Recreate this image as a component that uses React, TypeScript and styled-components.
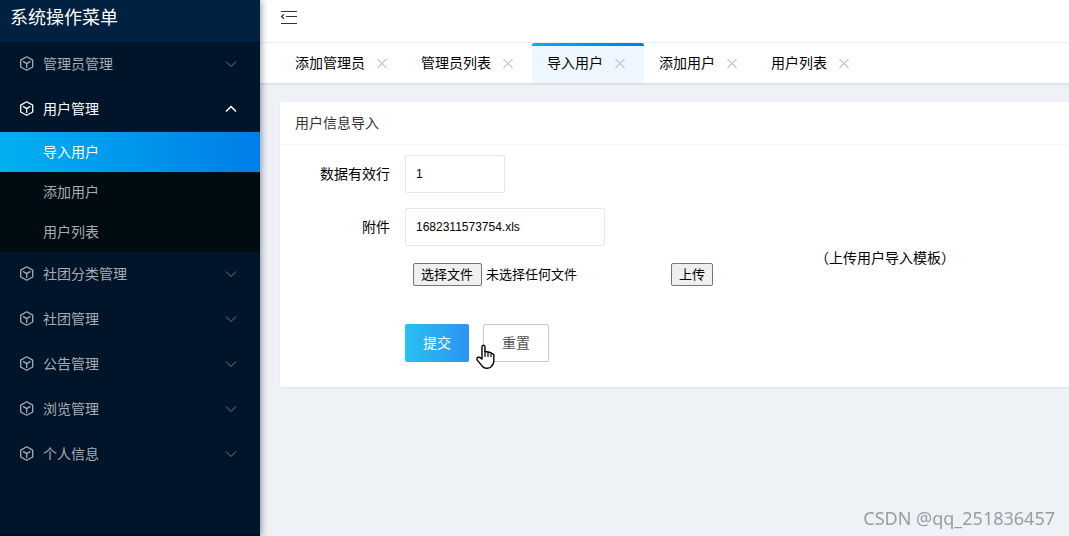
import React, { useState } from "react";
import styled, { createGlobalStyle, css } from "styled-components";

const GlobalStyle = createGlobalStyle`
  * { box-sizing: border-box; }
  body {
    margin: 0;
    background: #eef1f6;
    color: #000;
    font: 14px/20px "Liberation Sans", "Noto Sans CJK SC", sans-serif;
  }
  button, input { font-family: inherit; }
`;

const Shell = styled.div`
  display: flex;
  min-height: 100vh;
`;

const Sidebar = styled.nav`
  flex: 0 0 260px;
  z-index: 1;
  background: #001529;
  border-bottom: 1px solid #000c17;
  box-shadow: 2px 0 6px rgba(0, 21, 41, 0.35);
`;

const SidebarTitle = styled.h1`
  height: 42px;
  margin: 0;
  padding: 0 10px;
  background: #002140;
  color: #fff;
  font-size: 18px;
  font-weight: 400;
  line-height: 36px;
`;

const MenuList = styled.ul`
  margin: 0;
  padding: 0;
  list-style: none;
`;

const MenuButton = styled.button<{ $open: boolean }>`
  display: flex;
  align-items: center;
  gap: 8px;
  width: 100%;
  height: 45px;
  padding: 0 23px 3px 19px;
  border: 0;
  background: none;
  color: ${(p) => (p.$open ? "#fff" : "#a6adb4")};
  font-size: 14px;
  text-align: left;
  cursor: pointer;
`;

const MenuText = styled.span`
  flex: 1;
`;

const SubList = styled(MenuList)`
  background: #000c11;
`;

const SubLink = styled.a<{ $active: boolean }>`
  display: block;
  height: 40px;
  padding-left: 43px;
  color: #a6adb4;
  line-height: 40px;
  text-decoration: none;
  ${(p) =>
    p.$active &&
    css`
      background: linear-gradient(to right, #00b0f0, #007ee8);
      color: #fff;
    `}
`;

const Main = styled.div`
  flex: 1;
  min-width: 0;
`;

const TopBar = styled.header`
  height: 43px;
  padding: 8px 20px;
  border-bottom: 1px solid #f4f4f4;
  background: #fff;
`;

const IconButton = styled.button`
  display: block;
  padding: 0;
  border: 0;
  background: none;
  cursor: pointer;
  svg { display: block; }
`;

const TabBar = styled.div`
  display: flex;
  height: 40px;
  padding-left: 20px;
  background: #fff;
  box-shadow: 0 1px 3px rgba(0, 0, 0, 0.12);
`;

const Tab = styled.div<{ $active: boolean }>`
  display: flex;
  align-items: center;
  gap: 10px;
  padding: 0 17px 0 15px;
  background: ${(p) =>
    p.$active
      ? "linear-gradient(to right, #00b0f0, #007ee8) top / 100% 3px no-repeat #eef7ff"
      : "none"};
  border-radius: 2px 2px 0 0;
`;

const TabLink = styled.a`
  color: #000;
  text-decoration: none;
`;

const Card = styled.section`
  margin: 19px 0 0 20px;
  border-radius: 2px 0 0 2px;
  background: #fff;
  box-shadow: 0 1px 2px rgba(0, 0, 0, 0.06);
`;

const CardTitle = styled.h2`
  height: 43px;
  margin: 0;
  padding: 0 15px;
  border-bottom: 1px solid #f6f6f6;
  color: #333;
  font-size: 14px;
  font-weight: 400;
  line-height: 42px;
`;

const Form = styled.form`
  display: grid;
  grid-template-columns: 110px 1fr;
  column-gap: 15px;
  row-gap: 15px;
  padding: 10px 0 25px;
`;

const Label = styled.label`
  height: 38px;
  line-height: 38px;
  text-align: right;
`;

const TextInput = styled.input<{ $width: number }>`
  display: block;
  width: ${(p) => p.$width}px;
  height: 38px;
  padding: 0 10px;
  border: 1px solid #e6e6e6;
  border-radius: 2px;
  background: #fff;
  color: #000;
  font-size: 12px;
`;

const Attachment = styled.div`
  display: grid;
  grid-template-columns: 406px 1fr;
  align-items: center;
  height: 101px;
`;

const AttachmentFields = styled.div`
  display: flex;
  flex-direction: column;
  gap: 17px;
  align-self: start;
`;

const FileRow = styled.div`
  display: flex;
  align-items: center;
  padding-left: 8px;
`;

const FileInput = styled.input`
  position: absolute;
  width: 1px;
  height: 1px;
  opacity: 0;
`;

const nativeButton = css`
  height: 23px;
  padding: 0 7px;
  border: 1px solid #767676;
  border-radius: 2px;
  background: #efefef;
  color: #000;
  font-size: 13px;
  line-height: 21px;
`;

const FileButton = styled.label`
  ${nativeButton}
  min-width: 69px;
`;

const FileStatus = styled.span`
  width: 185px;
  margin-left: 4px;
  font-size: 13px;
`;

const UploadButton = styled.button`
  ${nativeButton}
`;

const TemplateLink = styled.a`
  padding: 0 0 2px 4px;
  color: #000;
  text-decoration: none;
`;

const Actions = styled.div`
  position: relative;
  grid-column: 2;
  display: flex;
  gap: 14px;
`;

const ActionButton = styled.button<{ $primary?: boolean }>`
  height: 38px;
  padding: 0 18px 2px;
  border: ${(p) => (p.$primary ? "0" : "1px solid #c9c9c9")};
  border-radius: 2px;
  background: ${(p) =>
    p.$primary ? "linear-gradient(to right, #29c0f0, #2b94f0)" : "#fff"};
  color: ${(p) => (p.$primary ? "#fff" : "#555")};
  font-size: 14px;
`;

const Pointer = styled.svg`
  position: absolute;
  left: 71px;
  top: 20px;
`;

const Watermark = styled.div`
  position: fixed;
  right: 14px;
  bottom: 8px;
  color: #999ca1;
  font-family: "Noto Sans", sans-serif;
  font-size: 18px;
`;

const CubeIcon = () => (
  <svg width="16" height="16" viewBox="0 0 16 16" fill="none" stroke="currentColor" strokeWidth="1.3" strokeLinejoin="round" aria-hidden="true">
    <path d="M7.7 1.8 13.7 5.1V12L7.7 15.3 1.7 12V5.1Z" />
    <path d="M4 6.4 7.7 8.600 11.4 6.4M7.7 8.600V13" />
  </svg>
);

const Chevron = ({ up }: { up: boolean }) => (
  <svg width="12" height="10" viewBox="0 0 12 10" fill="none" stroke="currentColor" strokeWidth={up ? 1.5 : 1} opacity={up ? 1 : 0.7} aria-hidden="true">
    <path d={up ? "M1 8.5 6 3.5 11 8.5" : "M1 3.5 6 8.5 11 3.5"} />
  </svg>
);

const FoldIcon = () => (
  <svg width="18" height="18" viewBox="0 0 18 18" fill="none" stroke="#333" strokeWidth="1.2" aria-hidden="true">
    <path d="M1 3.5H17M6 8.5H17M1 15.5H17M4 6.2 1.5 8.5 4 10.8" />
  </svg>
);

const CloseIcon = () => (
  <svg width="14" height="14" viewBox="0 0 14 14" fill="none" stroke="#c8c8c8" strokeWidth="1.2" aria-hidden="true">
    <path d="M2.5 3 11.5 12M11.5 3 2.5 12" />
  </svg>
);

const menus = [
  { name: "管理员管理" },
  { name: "用户管理", children: ["导入用户", "添加用户", "用户列表"] },
  { name: "社团分类管理" },
  { name: "社团管理" },
  { name: "公告管理" },
  { name: "浏览管理" },
  { name: "个人信息" },
];

const tabs = ["添加管理员", "管理员列表", "导入用户", "添加用户", "用户列表"];

export default function App() {
  const [current, setCurrent] = useState("导入用户");
  const [openMenu, setOpenMenu] = useState("用户管理");

  return (
    <Shell>
      <GlobalStyle />
      <Sidebar>
        <SidebarTitle>系统操作菜单</SidebarTitle>
        <MenuList>
          {menus.map(({ name, children }) => {
            const open = openMenu === name;
            return (
              <li key={name}>
                <MenuButton $open={open} aria-expanded={open} onClick={() => setOpenMenu(open ? "" : name)}>
                  <CubeIcon />
                  <MenuText>{name}</MenuText>
                  <Chevron up={open} />
                </MenuButton>
                {open && children && (
                  <SubList>
                    {children.map((child) => (
                      <li key={child}>
                        <SubLink href="#" $active={child === current} onClick={() => setCurrent(child)}>
                          {child}
                        </SubLink>
                      </li>
                    ))}
                  </SubList>
                )}
              </li>
            );
          })}
        </MenuList>
      </Sidebar>
      <Main>
        <TopBar>
          <IconButton aria-label="收起菜单"><FoldIcon /></IconButton>
        </TopBar>
        <TabBar>
          {tabs.map((tab) => (
            <Tab key={tab} $active={tab === current}>
              <TabLink href="#" onClick={() => setCurrent(tab)}>{tab}</TabLink>
              <IconButton aria-label={`关闭${tab}`}><CloseIcon /></IconButton>
            </Tab>
          ))}
        </TabBar>
        <Card>
          <CardTitle>用户信息导入</CardTitle>
          <Form onSubmit={(e) => e.preventDefault()}>
            <Label htmlFor="rows">数据有效行</Label>
            <TextInput id="rows" $width={100} defaultValue="1" />
            <Label htmlFor="attachment">附件</Label>
            <Attachment>
              <AttachmentFields>
                <TextInput id="attachment" $width={200} defaultValue="1682311573754.xls" />
                <FileRow>
                  <FileInput id="file" type="file" />
                  <FileButton htmlFor="file">选择文件</FileButton>
                  <FileStatus>未选择任何文件</FileStatus>
                  <UploadButton type="button">上传</UploadButton>
                </FileRow>
              </AttachmentFields>
              <TemplateLink href="#">（上传用户导入模板）</TemplateLink>
            </Attachment>
            <Actions>
              <ActionButton type="submit" $primary>提交</ActionButton>
              <ActionButton type="reset">重置</ActionButton>
              <Pointer width="20" height="26" viewBox="0 0 20 26" aria-hidden="true">
                <path
                  d="M6 15V3C6 .6 9 .6 9 3V7.500L12 8 15 8.800 17.800 10.500V17.500C17.800 19.500 16.500 21 15.500 22.300 14 24.600 8.500 25 6.800 22.800 5 21 4 19 1.500 16.500 .2 14.500 1.200 13 3 13.300 4.300 13.500 5 14.200 6 15Z"
                  fill="#fff"
                  stroke="#000"
                  strokeWidth="1.4"
                  strokeLinejoin="round"
                />
                <path d="M9 7V13M12 8.500V13M15 9.500V13" stroke="#000" strokeWidth="1.2" />
              </Pointer>
            </Actions>
          </Form>
        </Card>
      </Main>
      <Watermark>CSDN @qq_251836457</Watermark>
    </Shell>
  );
}
